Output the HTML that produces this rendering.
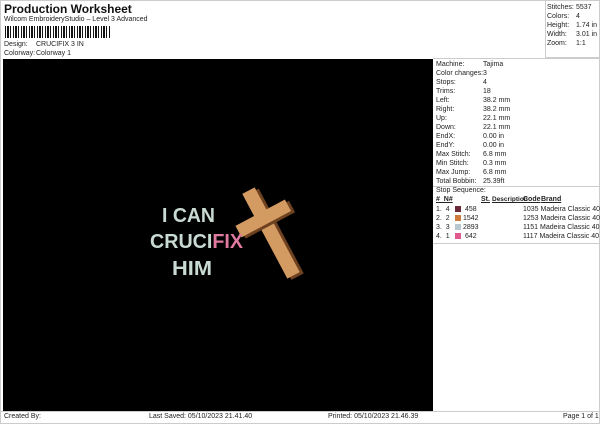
<!DOCTYPE html>
<html><head><style>
*{margin:0;padding:0;box-sizing:border-box}
body{width:600px;height:424px;background:#fff;font-family:"Liberation Sans",sans-serif;font-size:7px;color:#222;position:relative;overflow:hidden}
.a{position:absolute;white-space:nowrap}
</style></head><body>
<div class="a" style="left:0;top:0;width:600px;height:424px;border:1px solid #ccc"></div>
<div class="a" style="left:4px;top:2px;font-size:12px;font-weight:bold;color:#111">Production Worksheet</div>
<div class="a" style="left:4px;top:16px">Wilcom EmbroideryStudio – Level 3 Advanced</div>
<div class="a" style="left:5px;top:26px;width:106px;height:12px;background:repeating-linear-gradient(90deg,#111 0 1px,#fff 1px 2px,#111 2px 4px,#fff 4px 5px,#111 5px 6px,#fff 6px 8px)"></div>
<div class="a" style="left:4px;top:41px">Design:</div><div class="a" style="left:36px;top:41px">CRUCIFIX 3 IN</div>
<div class="a" style="left:4px;top:50px">Colorway:</div><div class="a" style="left:36px;top:50px">Colorway 1</div>
<div class="a" style="left:545px;top:0;width:55px;height:58px;border-left:1px solid #ccc;border-bottom:1px solid #ccc"></div>
<div class="a" style="left:433px;top:58px;width:167px;border-top:1px solid #ccc"></div>
<div class="a" style="left:547px;top:3px;line-height:9px">Stitches:<br>Colors:<br>Height:<br>Width:<br>Zoom:</div>
<div class="a" style="left:576px;top:3px;line-height:9px">5537<br>4<br>1.74 in<br>3.01 in<br>1:1</div>
<div class="a" style="left:3px;top:59px;width:430px;height:352px;background:#000"></div>
<svg class="a" style="left:0;top:0" width="600" height="424">
<g transform="translate(263,218) rotate(-28)">
<rect x="-4" y="-28" width="14" height="96" fill="#6e4220"/>
<rect x="-7" y="-31" width="14" height="96" fill="#d39a62"/>
<rect x="-25" y="-3" width="56" height="13" fill="#6e4220"/>
<rect x="-28" y="-6" width="56" height="13" fill="#d39a62"/>
</g>
<g font-family="Liberation Sans" font-weight="bold" font-size="20" fill="#c9dad2">
<text x="162" y="222" textLength="53" lengthAdjust="spacingAndGlyphs">I CAN</text>
<text x="150" y="248" textLength="93" lengthAdjust="spacingAndGlyphs">CRUCI<tspan fill="#e07aa0">FIX</tspan></text>
<text x="172" y="275" textLength="40" lengthAdjust="spacingAndGlyphs">HIM</text>
</g>
</svg>
<div class="a" style="left:436px;top:60px;line-height:9px">Machine:<br>Color changes:<br>Stops:<br>Trims:<br>Left:<br>Right:<br>Up:<br>Down:<br>EndX:<br>EndY:<br>Max Stitch:<br>Min Stitch:<br>Max Jump:<br>Total Bobbin:</div>
<div class="a" style="left:483px;top:60px;line-height:9px">Tajima<br>3<br>4<br>18<br>38.2 mm<br>38.2 mm<br>22.1 mm<br>22.1 mm<br>0.00 in<br>0.00 in<br>6.8 mm<br>0.3 mm<br>6.8 mm<br>25.39ft</div>
<div class="a" style="left:433px;top:186px;width:167px;border-top:1px solid #ccc"></div>
<div class="a" style="left:436px;top:187px">Stop Sequence:</div>
<div class="a" style="left:436px;top:196px;font-weight:bold;text-decoration:underline">#&nbsp; N#</div>
<div class="a" style="left:481px;top:196px;font-weight:bold;text-decoration:underline">St.</div>
<div class="a" style="left:492px;top:196px;font-weight:bold;text-decoration:underline;font-size:6.5px">Description</div>
<div class="a" style="left:523px;top:196px;font-weight:bold;text-decoration:underline">Code</div>
<div class="a" style="left:541px;top:196px;font-weight:bold;text-decoration:underline">Brand</div>
<div class="a" style="left:436px;top:205px;line-height:9px">1.&nbsp; 4<br>2.&nbsp; 2<br>3.&nbsp; 3<br>4.&nbsp; 1</div>
<div class="a" style="left:455px;top:206px;width:6px;height:6px;background:#6b2a3a"></div>
<div class="a" style="left:455px;top:215px;width:6px;height:6px;background:#d07a40"></div>
<div class="a" style="left:455px;top:224px;width:6px;height:6px;background:#b8c8d0"></div>
<div class="a" style="left:455px;top:233px;width:6px;height:6px;background:#e05a90"></div>
<div class="a" style="left:463px;top:205px;line-height:9px">&nbsp;458<br>1542<br>2893<br>&nbsp;642</div>
<div class="a" style="left:523px;top:205px;line-height:9px">1035 Madeira Classic 40<br>1253 Madeira Classic 40<br>1151 Madeira Classic 40<br>1117 Madeira Classic 40</div>
<div class="a" style="left:433px;top:243px;width:167px;border-top:1px solid #ccc"></div>
<div class="a" style="left:0;top:411px;width:600px;border-top:1px solid #ccc"></div>
<div class="a" style="left:4px;top:413px">Created By:</div>
<div class="a" style="left:149px;top:413px">Last Saved: 05/10/2023 21.41.40</div>
<div class="a" style="left:328px;top:413px">Printed: 05/10/2023 21.46.39</div>
<div class="a" style="left:563px;top:413px">Page 1 of 1</div>
</body></html>
